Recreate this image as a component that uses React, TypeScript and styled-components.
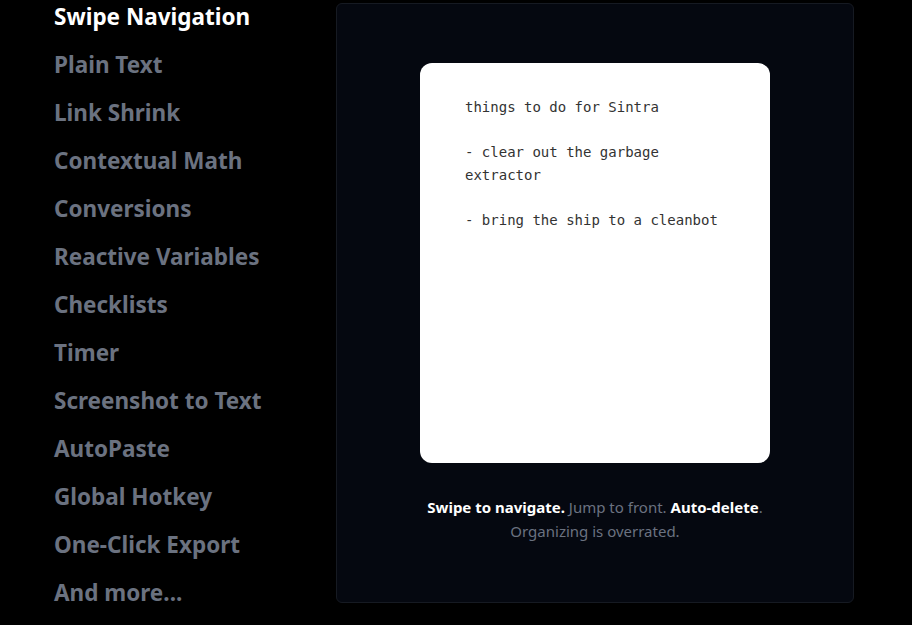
import styled, { createGlobalStyle } from "styled-components";

const GlobalStyle = createGlobalStyle`
  html, body {
    margin: 0;
    padding: 0;
    background: #000;
    font-family: "Noto Sans", "Open Sans", sans-serif;
  }
`;

const Page = styled.div`
  display: flex;
  align-items: flex-start;
  height: 625px;
  padding-left: 54px;
  overflow: hidden;
  box-sizing: border-box;
`;

const FeatureList = styled.ul`
  list-style: none;
  margin: 0;
  padding: 2px 0 0;
  width: 282px;
  display: flex;
  flex-direction: column;
  gap: 18px;
`;

const FeatureItem = styled.li<{ $active?: boolean }>`
  font-size: 22.5px;
  font-weight: 700;
  line-height: 30px;
  color: ${(p) => (p.$active ? "#ffffff" : "#6b7280")};
  white-space: nowrap;
`;

const Preview = styled.section`
  margin-top: 3px;
  width: 518px;
  height: 600px;
  box-sizing: border-box;
  background: #050810;
  border: 1px solid #161a22;
  border-radius: 6px;
  padding-top: 59px;
  display: flex;
  flex-direction: column;
  align-items: center;
`;

const NoteCard = styled.div`
  width: 350px;
  height: 400px;
  box-sizing: border-box;
  background: #fff;
  border-radius: 12px;
  padding: 33px 20px 0 45px;
  font-family: "DejaVu Sans Mono", "Liberation Mono", monospace;
  font-size: 14px;
  line-height: 22.5px;
  color: #333;
  white-space: pre-wrap;
`;

const Caption = styled.p`
  margin: 32px 0 0;
  font-size: 15px;
  line-height: 24px;
  text-align: center;
  color: #6b7280;
`;

const Strong = styled.strong`
  color: #fff;
  font-weight: 700;
`;

const features = [
  "Swipe Navigation",
  "Plain Text",
  "Link Shrink",
  "Contextual Math",
  "Conversions",
  "Reactive Variables",
  "Checklists",
  "Timer",
  "Screenshot to Text",
  "AutoPaste",
  "Global Hotkey",
  "One-Click Export",
  "And more...",
];

const note = `things to do for Sintra

- clear out the garbage
extractor

- bring the ship to a cleanbot`;

export default function App() {
  return (
    <>
      <GlobalStyle />
      <Page>
        <FeatureList>
          {features.map((f, i) => (
            <FeatureItem key={f} $active={i === 0}>
              {f}
            </FeatureItem>
          ))}
        </FeatureList>
        <Preview>
          <NoteCard>{note}</NoteCard>
          <Caption>
            <Strong>Swipe to navigate.</Strong> Jump to front.{" "}
            <Strong>Auto-delete</Strong>.
            <br />
            Organizing is overrated.
          </Caption>
        </Preview>
      </Page>
    </>
  );
}
